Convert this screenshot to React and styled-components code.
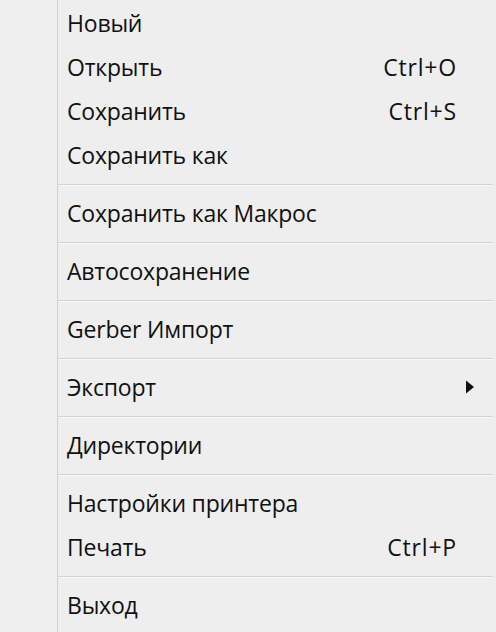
import React from "react";
import styled, { createGlobalStyle } from "styled-components";

const Global = createGlobalStyle`
  html, body { margin: 0; padding: 0; background: #eeeeee; }
  body { font-family: "Open Sans", "Noto Sans", "DejaVu Sans", sans-serif; }
`;

const Frame = styled.div`
  width: 496px;
  height: 632px;
  display: flex;
  background: #eeeeee;
  overflow: hidden;
`;

const Gutter = styled.div`
  width: 57px;
  flex: none;
  background: #efefef;
  border-right: 1px solid #d0d0d0;
`;

const Menu = styled.ul`
  list-style: none;
  margin: 0;
  padding: 1px 3px 0 0;
  flex: 1;
  display: flex;
  flex-direction: column;
`;

const Item = styled.li`
  height: 44px;
  display: grid;
  grid-template-columns: 1fr auto 36px;
  align-items: center;
  padding-left: 9px;
  color: #111111;
  font-size: 23px;
  line-height: 1;
`;

const Label = styled.span`
  white-space: nowrap;
  letter-spacing: -0.2px;
`;

const Shortcut = styled.span`
  white-space: nowrap;
  text-align: right;
  letter-spacing: 0.8px;
`;

const Arrow = styled.span`
  display: flex;
  justify-content: flex-start;
  padding-left: 8px;
`;

const Separator = styled.li`
  height: 1px;
  margin: 7px 0 6px 0;
  background: #d4d4d4;
  box-shadow: 0 1px 0 #f7f7f7;
`;

const groups = [
  [
    { label: "Новый" },
    { label: "Открыть", shortcut: "Ctrl+O" },
    { label: "Сохранить", shortcut: "Ctrl+S" },
    { label: "Сохранить как" },
  ],
  [{ label: "Сохранить как Макрос" }],
  [{ label: "Автосохранение" }],
  [{ label: "Gerber Импорт" }],
  [{ label: "Экспорт", submenu: true }],
  [{ label: "Директории" }],
  [
    { label: "Настройки принтера" },
    { label: "Печать", shortcut: "Ctrl+P" },
  ],
  [{ label: "Выход" }],
];

export default function App() {
  const rows = [];
  groups.forEach((g, gi) => {
    if (gi > 0) rows.push(<Separator key={"s" + gi} />);
    g.forEach((it, ii) => {
      rows.push(
        <Item key={gi + "-" + ii}>
          <Label>{it.label}</Label>
          <Shortcut>{it.shortcut || ""}</Shortcut>
          <Arrow>
            {it.submenu && (
              <svg width="10" height="14" viewBox="0 0 10 14">
                <path d="M1 0.5 L9 7 L1 13.5 Z" fill="#111" />
              </svg>
            )}
          </Arrow>
        </Item>
      );
    });
  });
  return (
    <>
      <Global />
      <Frame>
        <Gutter />
        <Menu>{rows}</Menu>
      </Frame>
    </>
  );
}
